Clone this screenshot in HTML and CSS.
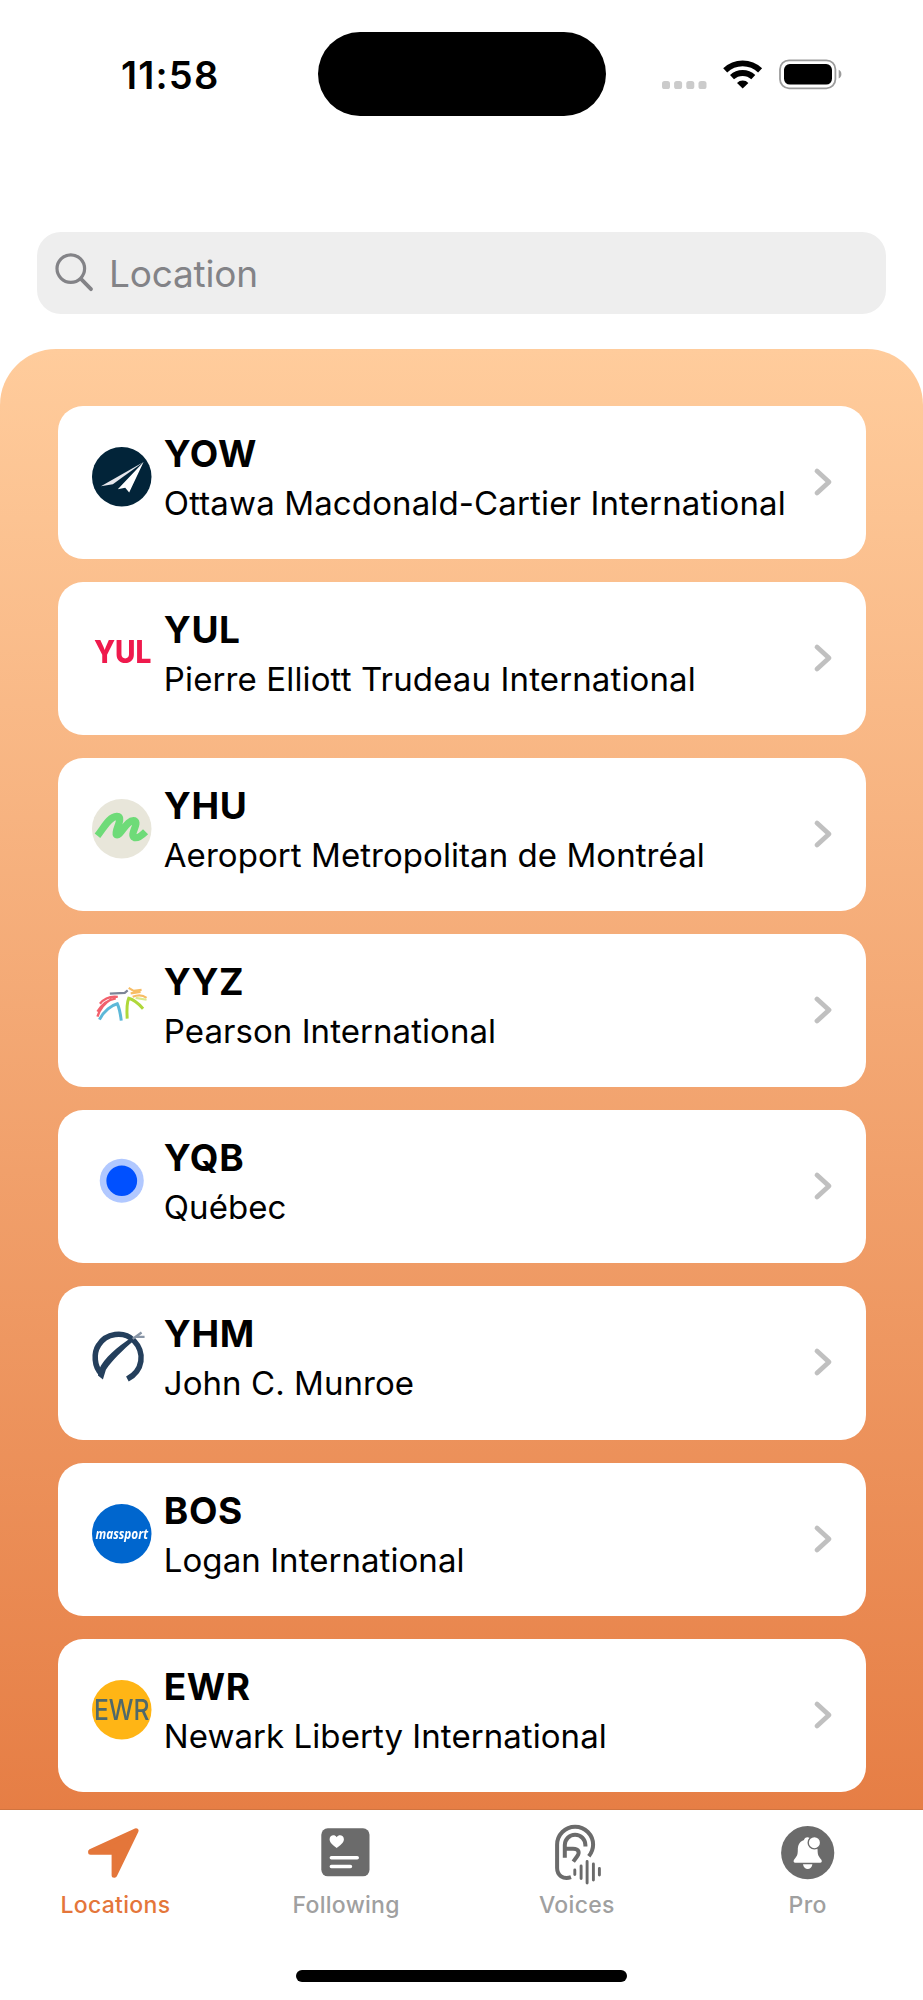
FILE: index.html
```html
<!DOCTYPE html>
<html lang="en">
<head>
<meta charset="utf-8">
<title>Locations</title>
<link rel="stylesheet" href="styles.css">
</head>
<body>
<div class="screen">
  <header class="status">
    <div class="time">11:58</div>
    <div class="island"></div>
    <svg class="indicators" width="180" height="40" viewBox="655 54 180 40">
      <g fill="#cbcbcb"><rect x="662" y="81" width="8" height="8" rx="2.6"/><rect x="674.1" y="81" width="8" height="8" rx="2.6"/><rect x="686.3" y="81" width="8" height="8" rx="2.6"/><rect x="698.5" y="81" width="8" height="8" rx="2.6"/></g>
      <g fill="none" stroke="#000" stroke-width="5.8"><path d="M725.2 70.3a25.3 25.3 0 0 1 34.9 0"/><path d="M732 77.2a15.6 15.6 0 0 1 21.3 0"/></g>
      <path d="M742.7 88.6l-5.7-5.7a8.2 8.2 0 0 1 11.4 0z"/>
      <rect x="780" y="60.3" width="55.4" height="28" rx="9" fill="none" stroke="#9c9c9c" stroke-width="1.8"/>
      <rect x="784" y="64" width="48" height="20.6" rx="5.8"/>
      <path d="M838.7 69.8c3.6 1.6 3.6 7.2 0 8.8z" fill="#9c9c9c"/>
    </svg>
  </header>

  <div class="search">
    <svg class="search-icon" width="40" height="40" viewBox="0 0 40 40" fill="none" stroke="#838387" stroke-linecap="round"><circle cx="15.8" cy="15.6" r="13.8" stroke-width="3.2"/><path d="M26.2 26.2L36 36.2" stroke-width="3.8"/></svg>
    <span>Location</span>
  </div>

  <main class="panel">
    <article class="card">
      <svg class="logo" viewBox="0 0 60 60"><circle cx="30" cy="30" r="30" fill="#022439"/><path d="M52 15L9 39.5L21 37.5z" fill="#e6e7ec"/><path d="M52 15L26 42.5L33.5 41L37.5 46z" fill="#fff"/></svg>
      <div class="info"><h2 class="code">YOW</h2><p class="name long">Ottawa Macdonald-Cartier International</p></div>
      <svg class="chevron" viewBox="0 0 18 28"><path d="M3 3L15 14L3 25"/></svg>
    </article>
    <article class="card">
      <svg class="logo soft" viewBox="0 0 60 60"><text class="yul" x="2" y="40.7" textLength="58" lengthAdjust="spacingAndGlyphs">YUL</text></svg>
      <div class="info"><h2 class="code">YUL</h2><p class="name long">Pierre Elliott Trudeau International</p></div>
      <svg class="chevron" viewBox="0 0 18 28"><path d="M3 3L15 14L3 25"/></svg>
    </article>
    <article class="card">
      <svg class="logo" viewBox="0 0 60 60"><circle cx="30" cy="30" r="30" fill="#e8e6da"/><path d="M5.5 37C12 29 17 18 25 17.5C33 18 22 32 24.5 36C29 38 35 20 43 22C48 25 37 36 43 39C47 40 51 36 54 33" fill="none" stroke="#6edb78" stroke-width="7.2" stroke-linejoin="round"/></svg>
      <div class="info"><h2 class="code">YHU</h2><p class="name">Aeroport Metropolitan de Montréal</p></div>
      <svg class="chevron" viewBox="0 0 18 28"><path d="M3 3L15 14L3 25"/></svg>
    </article>
    <article class="card">
      <svg class="logo soft" viewBox="0 0 60 60" fill="none" stroke-width="2.2"><path d="M18 18.8L33 18L36 15.5" stroke="#7d8598"/><path d="M26 22C18 21 12 24 8 29M24 23.5C15 25 9 31 5.5 37M20 24C13 28 8 34 5.5 42" stroke="#f2606c" stroke-width="2.4"/><path d="M7.5 45C12 36 20 30.5 25.5 29C27.5 33 28.5 38 29.5 46" stroke="#5db8d8" stroke-width="3"/><path d="M35.5 44C35 36 35 28 37 23.5C43 25 47 29 51.5 34" stroke="#afd83a" stroke-width="3"/><path d="M37 13L42 16L50 15M39 18.5L49 17M41 22C46 20 51 20 55 23" stroke="#f7bd65"/><path d="M44 23L55 25" stroke="#dce98c"/></svg>
      <div class="info"><h2 class="code">YYZ</h2><p class="name">Pearson International</p></div>
      <svg class="chevron" viewBox="0 0 18 28"><path d="M3 3L15 14L3 25"/></svg>
    </article>
    <article class="card">
      <svg class="logo" viewBox="0 0 60 60"><circle cx="30" cy="30" r="22.2" fill="#b1c8ff"/><circle cx="30" cy="30" r="15.5" fill="#0050ff"/></svg>
      <div class="info"><h2 class="code">YQB</h2><p class="name">Québec</p></div>
      <svg class="chevron" viewBox="0 0 18 28"><path d="M3 3L15 14L3 25"/></svg>
    </article>
    <article class="card">
      <svg class="logo soft" viewBox="0 0 60 60" fill="none" stroke="#243f5c"><path d="M9.5 47C2 40 1.5 26 6.5 18.5C14 6 32 3.5 42 13.5C54 26 51.5 44 35.7 52.5" stroke-width="5.6"/><path d="M6 49L11 53L14 43C20 34 31 23 43 13L39 11C26 20 12 31 7 43z" fill="#243f5c" stroke="none"/><path d="M41 12L50 5.5M44 10L53 10" stroke="#8895a6" stroke-width="2.4"/></svg>
      <div class="info"><h2 class="code">YHM</h2><p class="name">John C. Munroe</p></div>
      <svg class="chevron" viewBox="0 0 18 28"><path d="M3 3L15 14L3 25"/></svg>
    </article>
    <article class="card">
      <svg class="logo" viewBox="0 0 60 60"><circle cx="30" cy="30" r="30" fill="#0066ce"/><text class="massport soft" x="3.5" y="35.3" textLength="53" lengthAdjust="spacingAndGlyphs">massport</text></svg>
      <div class="info"><h2 class="code">BOS</h2><p class="name">Logan International</p></div>
      <svg class="chevron" viewBox="0 0 18 28"><path d="M3 3L15 14L3 25"/></svg>
    </article>
    <article class="card">
      <svg class="logo" viewBox="0 0 60 60"><circle cx="30" cy="30" r="30" fill="#ffb515"/><text class="ewr soft" x="2" y="40.5" textLength="56" lengthAdjust="spacingAndGlyphs">EWR</text></svg>
      <div class="info"><h2 class="code">EWR</h2><p class="name">Newark Liberty International</p></div>
      <svg class="chevron" viewBox="0 0 18 28"><path d="M3 3L15 14L3 25"/></svg>
    </article>
  </main>

  <nav class="tabs">
    <div class="tab active">
      <svg class="tab-icon" viewBox="0 0 64 64"><path d="M53 8.8L7.6 29.6V30.2H31.1V53.2H31.6Z" fill="#e4763a" stroke="#e4763a" stroke-width="5" stroke-linejoin="round"/></svg>
      <span>Locations</span>
    </div>
    <div class="tab">
      <svg class="tab-icon" viewBox="0 0 64 64"><rect x="7.3" y="6.3" width="48.2" height="48" rx="6.5" fill="#6b6b6b"/><path d="M22.7 26C17 22 15.6 19.5 15.6 17.2C15.6 13.4 20.4 11.6 22.7 15.2C25 11.6 29.9 13.4 29.9 17.2C29.9 19.5 28.4 22 22.7 26z" fill="#fff"/><path d="M17.4 35.8H43.2M17.4 44.5H36.4" stroke="#fff" stroke-width="3.6" stroke-linecap="round"/></svg>
      <span>Following</span>
    </div>
    <div class="tab">
      <svg class="tab-icon" viewBox="0 0 64 64" fill="none" stroke="#6b6b6b"><g stroke-width="4"><path d="M26 55.2C18 58 12.1 53 12.1 46V22.7A18 18 0 0 1 48.1 22.7C48.1 28 46.3 31 43.8 34.3"/><path d="M19.8 35.8V23A10.3 10.3 0 0 1 40.4 23V24.5" /><path d="M20 26.7H28C34 26.7 35 30.5 32 34.5L28.3 39.6"/></g><path d="M29.8 48V52.5M36.1 44V56.5M42.1 39.5V61M48.4 42V58M54.4 46.5V53" stroke-width="2.9" stroke-linecap="round"/></svg>
      <span>Voices</span>
    </div>
    <div class="tab">
      <svg class="tab-icon" viewBox="0 0 64 64"><circle cx="31.7" cy="30.7" r="26.6" fill="#6b6b6b"/><path d="M31.7 15.2C29.5 15.2 28.3 16.5 28 18C23.5 19.5 21.8 23 21.8 28C21.8 33.5 20.5 34.5 18.2 37.4C17 39 17.6 40.7 19.3 40.7H44.1C45.8 40.7 46.4 39 45.2 37.4C42.9 34.5 41.6 33.5 41.6 28L40 18z" fill="#fff"/><path d="M27 42.3H36.4C36 45.5 34 47 31.7 47S27.4 45.5 27 42.3z" fill="#fff"/><circle cx="38.4" cy="20.7" r="6.2" fill="#fff" stroke="#6b6b6b" stroke-width="1.4"/></svg>
      <span>Pro</span>
    </div>
  </nav>
  <footer class="home"><div class="home-bar"></div></footer>
</div>
</body>
</html>
```

FILE: styles.css
```css
* { box-sizing: border-box; }
body { margin: 0; background: #fff; font-family: Inter, "Liberation Sans", sans-serif; color: #000; }
h2, p { margin: 0; }
svg { display: block; flex: none; overflow: visible; }

.screen { width: 923px; height: 2000px; overflow: hidden; display: flex; flex-direction: column; }

.status { height: 232px; flex: none; padding-top: 32px; display: grid; grid-template-columns: 317.5px 288px 1fr; align-items: start; }
.time { padding: 21px 0 0 121px; font-size: 38px; line-height: 45px; font-weight: 600; letter-spacing: 1.2px; }
.island { height: 84px; border-radius: 42px; background: #000; }
.indicators { margin: 22px 0 0 49.5px; }

.search { height: 82px; flex: none; margin: 0 37px 35px; padding-left: 18px; border-radius: 24px; background: #eee; color: #838387; display: flex; align-items: center; gap: 14px; font-size: 37px; line-height: 45px; letter-spacing: -0.2px; }

.panel { height: 1460px; flex: none; padding: 57px 57.5px 0; border-radius: 56px 56px 0 0; background: linear-gradient(#ffcc9c, #e67e45); display: flex; flex-direction: column; gap: 23px; overflow: hidden; }
.card { height: 153.1px; flex: none; padding: 25px 34px 0 34.5px; border-radius: 25px; background: #fff; display: flex; align-items: flex-start; }
.logo { width: 59.5px; height: 59.5px; margin-top: 16px; }
.soft { filter: blur(0.7px); }
.info { flex: 1; min-width: 0; padding-left: 12.3px; white-space: nowrap; }
.code { font-size: 37px; line-height: 45px; font-weight: 700; letter-spacing: 0.6px; }
.name { margin-top: 7px; font-size: 33px; line-height: 40px; letter-spacing: 0.06px; }
.name.long { letter-spacing: 0.13px; }
.chevron { width: 18px; height: 28px; margin-top: 37px; fill: none; stroke: #c0c0c0; stroke-width: 4.8; stroke-linecap: round; stroke-linejoin: round; }

.yul { font: 800 31px Inter, sans-serif; fill: #ef1a4d; }
.massport { font: italic 700 15px "Open Sans", sans-serif; fill: #fff; }
.ewr { font: 500 28px Inter, sans-serif; fill: #50696a; }

.tabs { height: 131px; flex: none; border-top: 1px solid #cf7440; display: grid; grid-template-columns: repeat(4, 1fr); padding-top: 12px; color: #a0a0a0; }
.tab { display: flex; flex-direction: column; align-items: center; gap: 5px; font-size: 23px; line-height: 28px; font-weight: 500; letter-spacing: 0.3px; }
.tab.active { color: #e4763a; }
.tab-icon { width: 64px; height: 64px; }

.home { flex: 1; padding-top: 30px; display: flex; justify-content: center; }
.home-bar { width: 331px; height: 11.5px; border-radius: 6px; background: #000; }
```
